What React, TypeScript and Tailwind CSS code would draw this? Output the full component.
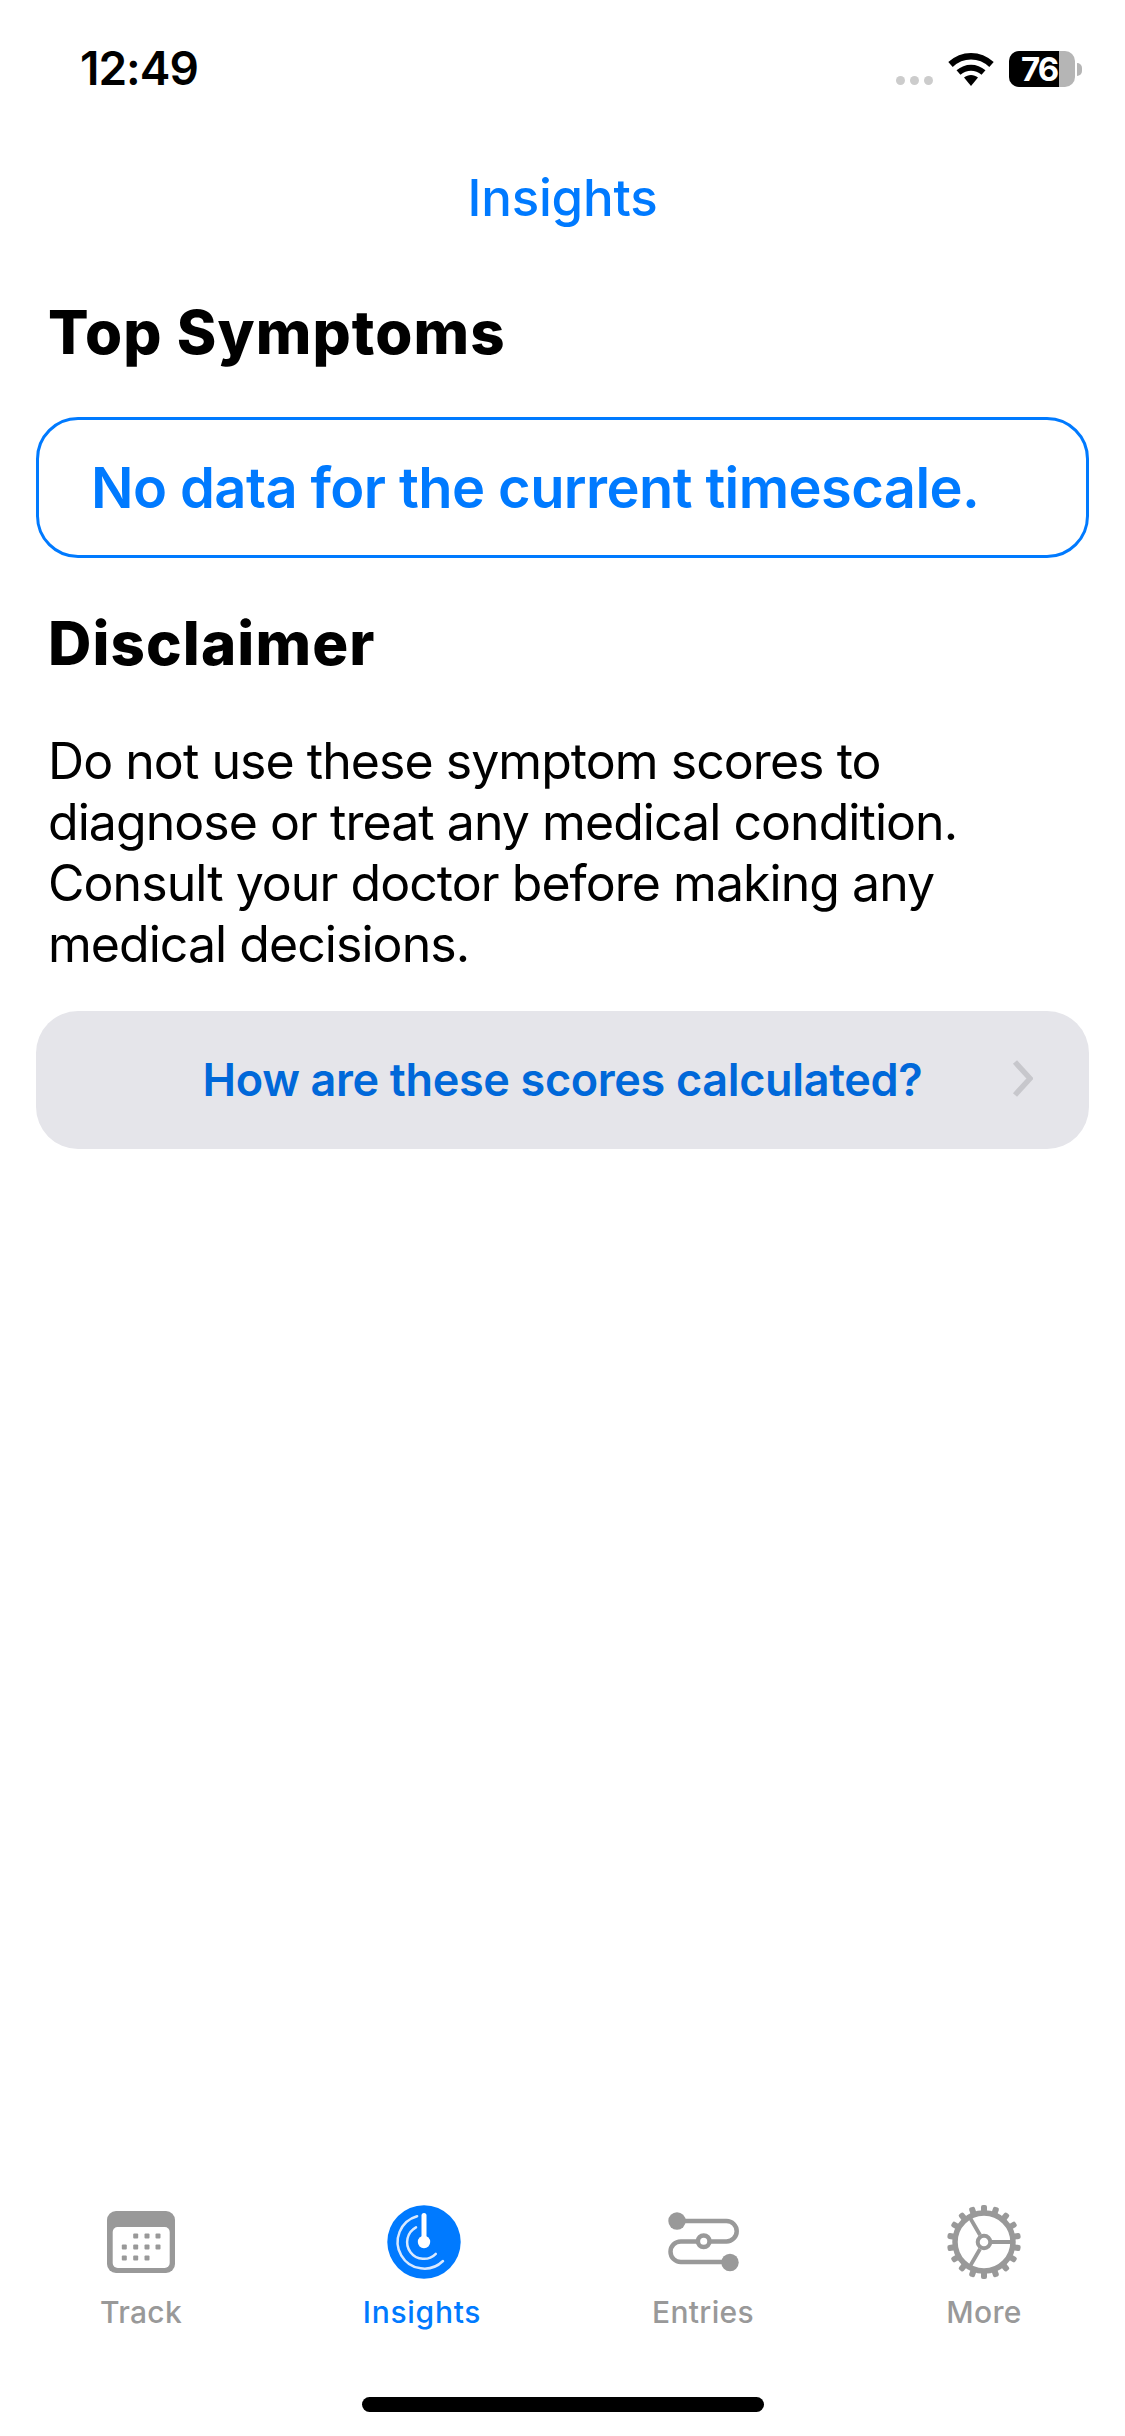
const font = { fontFamily: "Inter, 'Liberation Sans', sans-serif" };

function Wifi() {
  return (
    <svg width="46" height="33" viewBox="0 0 46 33" fill="none">
      <path d="M2.500 11.500C14.500 0.500 31.500 0.500 43.500 11.500" stroke="#000" strokeWidth="6.500" />
      <path d="M10.500 19.500C18 13 28 13 35.500 19.500" stroke="#000" strokeWidth="6" />
      <path d="M16 24.500C20 21 26 21 30 24.500L23 33Z" fill="#000" />
    </svg>
  );
}

function Battery() {
  return (
    <div className="flex items-center">
      <div className="relative flex h-[36px] w-[66px] items-center rounded-[10px] bg-[#b5b5b5]">
        <div className="absolute inset-y-0 left-0 w-[50px] rounded-l-[10px] bg-black" />
        <span className="relative ml-[12px] text-[33px] leading-none font-bold tracking-[-2px] text-white">76</span>
      </div>
      <div className="ml-[2px] h-[13px] w-[5px] rounded-r-full bg-[#b5b5b5]" />
    </div>
  );
}

function TrackIcon() {
  const cols = [17.3, 28.7, 40, 51];
  const dots = [
    [1, 25], [2, 25], [3, 25],
    [0, 36], [1, 36], [2, 36], [3, 36],
    [0, 47], [1, 47], [2, 47],
  ];
  return (
    <svg width="68" height="62" viewBox="0 0 68 62">
      <rect width="68" height="62" rx="9" fill="#999999" />
      <rect x="5.700" y="16" width="57" height="41" rx="5" fill="#fff" />
      {dots.map(([c, y]) => (
        <rect key={`${c}-${y}`} x={cols[c] - 2.5} y={y - 2.5} width="5" height="5" rx="1" fill="#999999" />
      ))}
    </svg>
  );
}

function InsightsIcon() {
  return (
    <svg className="ml-[3px]" width="74" height="74" viewBox="0 0 74 74" fill="none">
      <circle cx="37" cy="37" r="36.700" fill="#007aff" />
      <path d="M37 10.500V35" stroke="#fff" strokeWidth="5" strokeLinecap="round" />
      <circle cx="37" cy="37" r="6.200" fill="#fff" />
      <path d="M30.100 11.200A26.700 26.700 0 1 0 56 56" stroke="#d9e9ff" strokeWidth="2.500" strokeLinecap="round" />
      <path d="M29 22.400A16.700 16.700 0 1 0 48.800 48.800" stroke="#d9e9ff" strokeWidth="2.500" strokeLinecap="round" />
    </svg>
  );
}

function EntriesIcon() {
  return (
    <svg width="71" height="60" viewBox="0 0 71 60" fill="none">
      <path d="M9 9H58.500A10.200 10.200 0 0 1 58.500 29.400H12.800A10.300 10.300 0 0 0 12.800 50H62" stroke="#999" strokeWidth="4.500" />
      <circle cx="9" cy="9" r="8.700" fill="#999" />
      <circle cx="62" cy="50.500" r="8.700" fill="#999" />
      <circle cx="35.700" cy="29.300" r="5.800" fill="#fff" stroke="#999" strokeWidth="4.500" />
    </svg>
  );
}

function MoreIcon() {
  const teeth = Array.from({ length: 18 }, (_, i) => i * 20);
  return (
    <svg width="76" height="76" viewBox="0 0 76 76" fill="none">
      {teeth.map((a) => (
        <rect key={a} x="35" y="1" width="6" height="9" rx="2" fill="#999" transform={`rotate(${a} 38 38)`} />
      ))}
      <circle cx="38" cy="38" r="29" stroke="#999" strokeWidth="5.500" />
      <path d="M46 38H66M34 31L24 13.800M34 45L24 62.200" stroke="#999" strokeWidth="3.800" />
      <circle cx="38" cy="38" r="6.300" fill="#fff" stroke="#999" strokeWidth="4" />
    </svg>
  );
}

function Tab({ label, active, icon }: { label: string; active?: boolean; icon: React.ReactNode }) {
  return (
    <div className="flex w-[281px] flex-col items-center">
      <div className="flex h-[76px] items-center justify-center pt-[2px]">{icon}</div>
      <span className={`mt-[15px] text-[30px] leading-[36px] font-medium ${active ? "tracking-[0.7px] text-[#007aff]" : "tracking-[0.3px] text-[#999999]"}`}>
        {label}
      </span>
    </div>
  );
}

export default function App() {
  return (
    <div className="flex h-[2436px] w-[1125px] flex-col overflow-hidden bg-white text-black" style={font}>
      <div className="flex h-[135px] shrink-0 items-start justify-between pt-[44px] pr-[43px] pl-[80px]">
        <span className="text-[46px] leading-[48px] font-semibold tracking-[-1px]">12:49</span>
        <div className="flex items-center pt-[7px]">
          <div className="mt-[22px] mr-[15px] flex gap-[5px]">
            <div className="h-[9px] w-[9px] rounded-full bg-[#cccccc]" />
            <div className="h-[9px] w-[9px] rounded-full bg-[#cccccc]" />
            <div className="h-[9px] w-[9px] rounded-full bg-[#cccccc]" />
          </div>
          <div className="mr-[15px]"><Wifi /></div>
          <Battery />
        </div>
      </div>

      <div className="flex h-[126px] shrink-0 items-start justify-center pt-[32px]">
        <span className="text-[51px] leading-[62px] font-medium tracking-[-0.2px] text-[#007aff]">Insights</span>
      </div>

      <h2 className="mt-[35px] ml-[48px] text-[60px] leading-[72px] font-extrabold tracking-[1.1px]">Top Symptoms</h2>

      <div className="mx-[36px] mt-[49px] flex h-[141px] shrink-0 items-center rounded-[42px] border-[3px] border-[#007aff] pl-[52px]">
        <span className="text-[56px] leading-[68px] font-semibold tracking-[-0.58px] text-[#007aff]">No data for the current timescale.</span>
      </div>

      <h2 className="mt-[49px] ml-[48px] text-[60px] leading-[72px] font-extrabold tracking-[1.1px]">Disclaimer</h2>

      <p className="mt-[52px] mr-[100px] ml-[48px] text-[50px] leading-[61px] tracking-[-0.95px]">
        Do not use these symptom scores to diagnose or treat any medical condition. Consult your doctor before making any medical decisions.
      </p>

      <div className="relative mx-[36px] mt-[36px] flex h-[138px] shrink-0 items-center justify-center rounded-[42px] bg-[#e5e5ea]">
        <span className="text-[45px] leading-[54px] font-semibold tracking-[-0.35px] text-[#0068d9]">How are these scores calculated?</span>
        <svg className="absolute top-[49px] right-[56px]" width="21" height="37" viewBox="0 0 21 37" fill="none">
          <path d="M3 2L18 18.500L3 35" stroke="#c7c7cc" strokeWidth="5.500" />
        </svg>
      </div>

      <div className="flex-1" />

      <div className="flex shrink-0 justify-center">
        <Tab label="Track" icon={<TrackIcon />} />
        <Tab label="Insights" active icon={<InsightsIcon />} />
        <Tab label="Entries" icon={<EntriesIcon />} />
        <Tab label="More" icon={<MoreIcon />} />
      </div>

      <div className="mx-auto mt-[67px] mb-[24px] h-[15px] w-[402px] shrink-0 rounded-full bg-black" />
    </div>
  );
}
